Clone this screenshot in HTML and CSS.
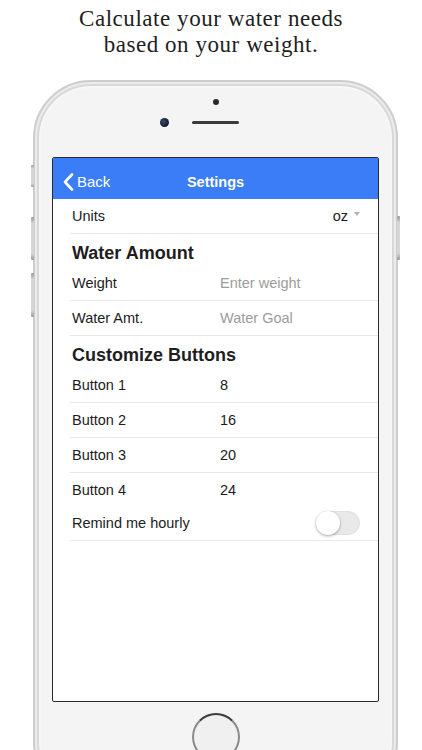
FILE: index.html
```html
<!DOCTYPE html>
<html lang="en">
<head>
    <meta charset="UTF-8">
    <meta name="viewport" content="width=device-width, initial-scale=1.0">
    <title>Water Settings</title>
    <link rel="stylesheet" href="styles.css">
</head>
<body>

<div class="caption">
    <p>Calculate your water needs</p>
    <p>based on your weight.</p>
</div>

<div class="phone">
    <!-- hardware buttons on the frame edge -->
    <span class="side-btn mute"></span>
    <span class="side-btn vol-up"></span>
    <span class="side-btn vol-down"></span>
    <span class="side-btn power"></span>

    <div class="bezel-top">
        <span class="sensor"></span>
        <div class="cam-row">
            <span class="camera"></span>
            <span class="speaker"></span>
        </div>
    </div>

    <div class="screen">
        <div class="nav-bar">
            <a class="back" href="#">
                <svg width="11" height="18" viewBox="0 0 11 18">
                    <polyline points="9,1.5 2,9 9,16.5" fill="none" stroke="#fff" stroke-width="2.6" stroke-linecap="round" stroke-linejoin="round"/>
                </svg>
                Back
            </a>
            <div class="nav-title">Settings</div>
            <div class="nav-spacer"></div>
        </div>

        <div class="list">
            <div class="row line">
                <span class="label">Units</span>
                <span class="picker">oz <span class="caret"></span></span>
            </div>

            <h2 class="section">Water Amount</h2>
            <div class="row grid line">
                <span class="label">Weight</span>
                <span class="placeholder">Enter weight</span>
            </div>
            <div class="row grid line">
                <span class="label">Water Amt.</span>
                <span class="placeholder">Water Goal</span>
            </div>

            <h2 class="section">Customize Buttons</h2>
            <div class="row grid line">
                <span class="label">Button 1</span>
                <span class="value">8</span>
            </div>
            <div class="row grid line">
                <span class="label">Button 2</span>
                <span class="value">16</span>
            </div>
            <div class="row grid line">
                <span class="label">Button 3</span>
                <span class="value">20</span>
            </div>
            <div class="row grid tight">
                <span class="label">Button 4</span>
                <span class="value">24</span>
            </div>
            <div class="row line">
                <span class="label">Remind me hourly</span>
                <span class="toggle"><span class="knob"></span></span>
            </div>
        </div>
    </div>

    <div class="bezel-bottom">
        <span class="home-btn"></span>
    </div>
</div>

</body>
</html>
```

FILE: styles.css
```css
* {
    margin: 0;
    padding: 0;
    box-sizing: border-box;
}

html, body {
    height: 750px;
    overflow: hidden;
}

body {
    background-color: #fff;
    font-family: "Liberation Sans", Arial, sans-serif;
    color: #1c1c1c;
}

.caption {
    padding-top: 6px;
    text-align: center;
    font-family: "Liberation Serif", "Times New Roman", serif;
    font-size: 23px;
    line-height: 26px;
    letter-spacing: 0.55px;
    color: #1e1e1e;
}

/* phone frame */
.phone {
    position: relative;
    margin: 22px 0 0 33px;
    width: 365px;
    height: 720px;
    padding: 0 17px;
    border: 2px solid #cdcdcd;
    border-radius: 58px;
    background-color: #f4f4f4;
    box-shadow: inset 0 0 0 2px #ececec, inset 0 0 0 4px #d8d8d8, inset 0 0 0 6px #f7f7f7;
    display: flex;
    flex-direction: column;
}

.side-btn {
    position: absolute;
    width: 3px;
    background: linear-gradient(#9a9a9a, #d6d6d6 15%, #d6d6d6 85%, #9a9a9a);
    border-radius: 1px;
}

.mute { left: -4px; top: 83px; height: 22px; }
.vol-up { left: -4px; top: 135px; height: 43px; }
.vol-down { left: -4px; top: 191px; height: 44px; }
.power { right: -4px; top: 134px; height: 44px; }

.bezel-top {
    height: 75px;
    display: flex;
    flex-direction: column;
    align-items: center;
}

.sensor {
    margin-top: 17px;
    width: 6px;
    height: 6px;
    border-radius: 50%;
    background-color: #2a2a2a;
}

.cam-row {
    margin-top: 13px;
    padding-right: 32px;
    display: flex;
    align-items: center;
    gap: 23px;
}

.camera {
    width: 9px;
    height: 9px;
    border-radius: 50%;
    background: radial-gradient(circle at 40% 40%, #3b4a6b, #121826 70%);
}

.speaker {
    width: 47px;
    height: 3px;
    border-radius: 2px;
    background-color: #3a3a3a;
}

/* screen */
.screen {
    height: 545px;
    border: 1.5px solid #2b2b2b;
    border-radius: 2px;
    background-color: #fff;
    overflow: hidden;
}

.nav-bar {
    height: 41px;
    padding: 6px 10px 0;
    background-color: #3b7df6;
    color: #fff;
    display: flex;
    align-items: center;
}

.back {
    flex: 1;
    display: flex;
    align-items: center;
    gap: 3px;
    color: #fff;
    text-decoration: none;
    font-size: 15px;
}

.nav-title {
    font-size: 14.5px;
    font-weight: bold;
}

.nav-spacer {
    flex: 1;
}

.list {
    margin-left: 17px;
}

.row {
    height: 35px;
    display: flex;
    align-items: center;
    justify-content: space-between;
    padding: 0 18px 0 2px;
    font-size: 14.5px;
}

.row.grid {
    display: grid;
    grid-template-columns: 148px 1fr;
}

.row.tight {
    height: 33px;
}

.line {
    border-bottom: 1px solid #e8e8e8;
}

.section {
    height: 32px;
    padding: 9px 0 0 2px;
    font-size: 18px;
    font-weight: bold;
    color: #1e1e1e;
}

.placeholder {
    color: #9c9c9c;
}

.picker {
    display: flex;
    align-items: center;
    gap: 6px;
    margin-top: -1px;
}

.caret {
    width: 0;
    height: 0;
    margin-top: -4px;
    border-left: 3.5px solid transparent;
    border-right: 3.5px solid transparent;
    border-top: 4px solid #b3b3b3;
}

.toggle {
    width: 44px;
    height: 24px;
    border-radius: 12px;
    background-color: #e9e9e9;
    border: 1px solid #e0e0e0;
    display: flex;
    align-items: center;
}

.knob {
    width: 24px;
    height: 24px;
    margin-left: -1px;
    border-radius: 50%;
    background-color: #fff;
    box-shadow: 0 1px 3px rgba(0, 0, 0, 0.35);
}

.bezel-bottom {
    display: flex;
    justify-content: center;
    padding-top: 11px;
}

.home-btn {
    width: 48px;
    height: 48px;
    border-radius: 50%;
    border: 2px solid #c8c8c8;
    border-top-color: #3c3c3c;
    border-left-color: #8a8a8a;
    border-right-color: #8a8a8a;
    background-color: #f0f0f0;
}
```
